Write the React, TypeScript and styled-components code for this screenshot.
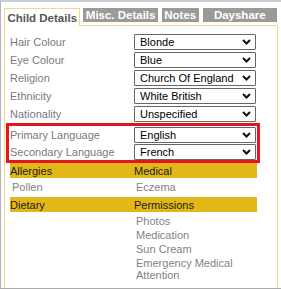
import React from 'react';
import styled, { createGlobalStyle } from 'styled-components';

const GlobalStyle = createGlobalStyle`
  html, body {
    margin: 0;
    padding: 0;
    background: #fff;
  }
  body {
    font-family: 'Liberation Sans', Arial, sans-serif;
    font-size: 11px;
  }
`;

const details = [
    { label: 'Hair Colour', value: 'Blonde' },
    { label: 'Eye Colour', value: 'Blue' },
    { label: 'Religion', value: 'Church Of England' },
    { label: 'Ethnicity', value: 'White British' },
    { label: 'Nationality', value: 'Unspecified' },
];

const languages = [
    { label: 'Primary Language', value: 'English' },
    { label: 'Secondary Language', value: 'French' },
];

const permissions = ['Photos', 'Medication', 'Sun Cream', 'Emergency Medical Attention'];

const tabs = ['Child Details', 'Misc. Details', 'Notes', 'Dayshare'];

const Chevron = () => (
    <svg width="9" height="6" viewBox="0 0 9 6">
        <polyline points="1,1 4.5,4.5 8,1" fill="none" stroke="#111" strokeWidth="2" />
    </svg>
);

const Select = ({ value }: { value: string }) => (
    <SelectBox>
        <span>{value}</span>
        <Chevron />
    </SelectBox>
);

const App = () => {
    return (
        <Frame>
            <GlobalStyle />
            <TabBar>
                {tabs.map((t, i) => (
                    <Tab key={t} active={i === 0} width={[77, 75, 37, 75][i]}>
                        {t}
                    </Tab>
                ))}
            </TabBar>
            <Panel>
                {details.map(d => (
                    <Row key={d.label}>
                        <Label>{d.label}</Label>
                        <Select value={d.value} />
                    </Row>
                ))}
                <Highlight>
                    {languages.map(d => (
                        <Row key={d.label} tight>
                            <Label>{d.label}</Label>
                            <Select value={d.value} />
                        </Row>
                    ))}
                </Highlight>
                <Band>
                    <span>Allergies</span>
                    <span>Medical</span>
                </Band>
                <InfoRow>
                    <Item>Pollen</Item>
                    <Item>Eczema</Item>
                </InfoRow>
                <Band>
                    <span>Dietary</span>
                    <span>Permissions</span>
                </Band>
                <InfoRow>
                    <div />
                    <List>
                        {permissions.map(p => (
                            <Item key={p}>{p}</Item>
                        ))}
                    </List>
                </InfoRow>
            </Panel>
        </Frame>
    );
};

export default App;

const Frame = styled.div`
    height: 289px;
    box-sizing: border-box;
    border-top: 2px solid #c9cdd9;
    border-left: 1px solid #b4b4b4;
    border-bottom: 1px solid #a8a8a8;
    padding: 6px 3px 0 3px;
    display: flex;
    flex-direction: column;
`;

const TabBar = styled.div`
    display: flex;
    align-items: flex-start;
    gap: 4px;
    padding-right: 1px;
`;

const Tab = styled.div<{ active?: boolean; width: number }>`
    box-sizing: border-box;
    width: ${p => p.width}px;
    height: ${p => (p.active ? 18 : 14)}px;
    margin-right: ${p => (p.active ? -1 : 0)}px;
    font-weight: bold;
    font-size: 11.5px;
    line-height: 14px;
    text-align: center;
    white-space: nowrap;
    color: ${p => (p.active ? '#555' : '#fff')};
    background: ${p => (p.active ? '#fff' : '#9a9a9a')};
    border: ${p => (p.active ? '1px solid #f5d98a' : 'none')};
    border-bottom: none;
    padding-top: ${p => (p.active ? 2 : 0)}px;
    margin-bottom: ${p => (p.active ? -1 : 0)}px;
    position: relative;
    z-index: ${p => (p.active ? 1 : 0)};
`;

const Panel = styled.div`
    flex: 1;
    width: 274px;
    box-sizing: border-box;
    border: 1px solid #f5d98a;
    border-bottom: none;
    padding: 7px 0 0 5px;
    display: flex;
    flex-direction: column;
`;

const Row = styled.div<{ tight?: boolean }>`
    display: grid;
    grid-template-columns: 124px 122px;
    align-items: center;
    height: ${p => (p.tight ? 17 : 18)}px;
`;

const Label = styled.div`
    color: #7a7a7a;
    font-size: 11px;
    white-space: nowrap;
`;

const SelectBox = styled.div`
    box-sizing: border-box;
    height: 16px;
    border: 1px solid #666;
    border-radius: 1px;
    display: flex;
    align-items: center;
    justify-content: space-between;
    padding: 0 4px 0 5px;
    color: #000;
    font-size: 11px;
    background: #fff;
`;

const Highlight = styled.div`
    margin: 0 0 0 -4px;
    width: 254px;
    box-sizing: border-box;
    border: 3px solid #e3161e;
    padding: 0 0 0 1px;
`;

const Band = styled.div`
    display: grid;
    grid-template-columns: 124px 123px;
    height: 15px;
    align-items: center;
    background: #e2b718;
    color: #1c1c1c;
    font-size: 11px;
    width: 247px;
`;

const InfoRow = styled.div`
    display: grid;
    grid-template-columns: 124px 123px;
    align-items: start;
    padding: 2px 0 3px 0;
`;

const List = styled.div`
    display: flex;
    flex-direction: column;
`;

const Item = styled.div`
    color: #828282;
    font-size: 11px;
    line-height: 12px;
    padding: 1px 0 1px 2px;
    width: 100px;
`;
